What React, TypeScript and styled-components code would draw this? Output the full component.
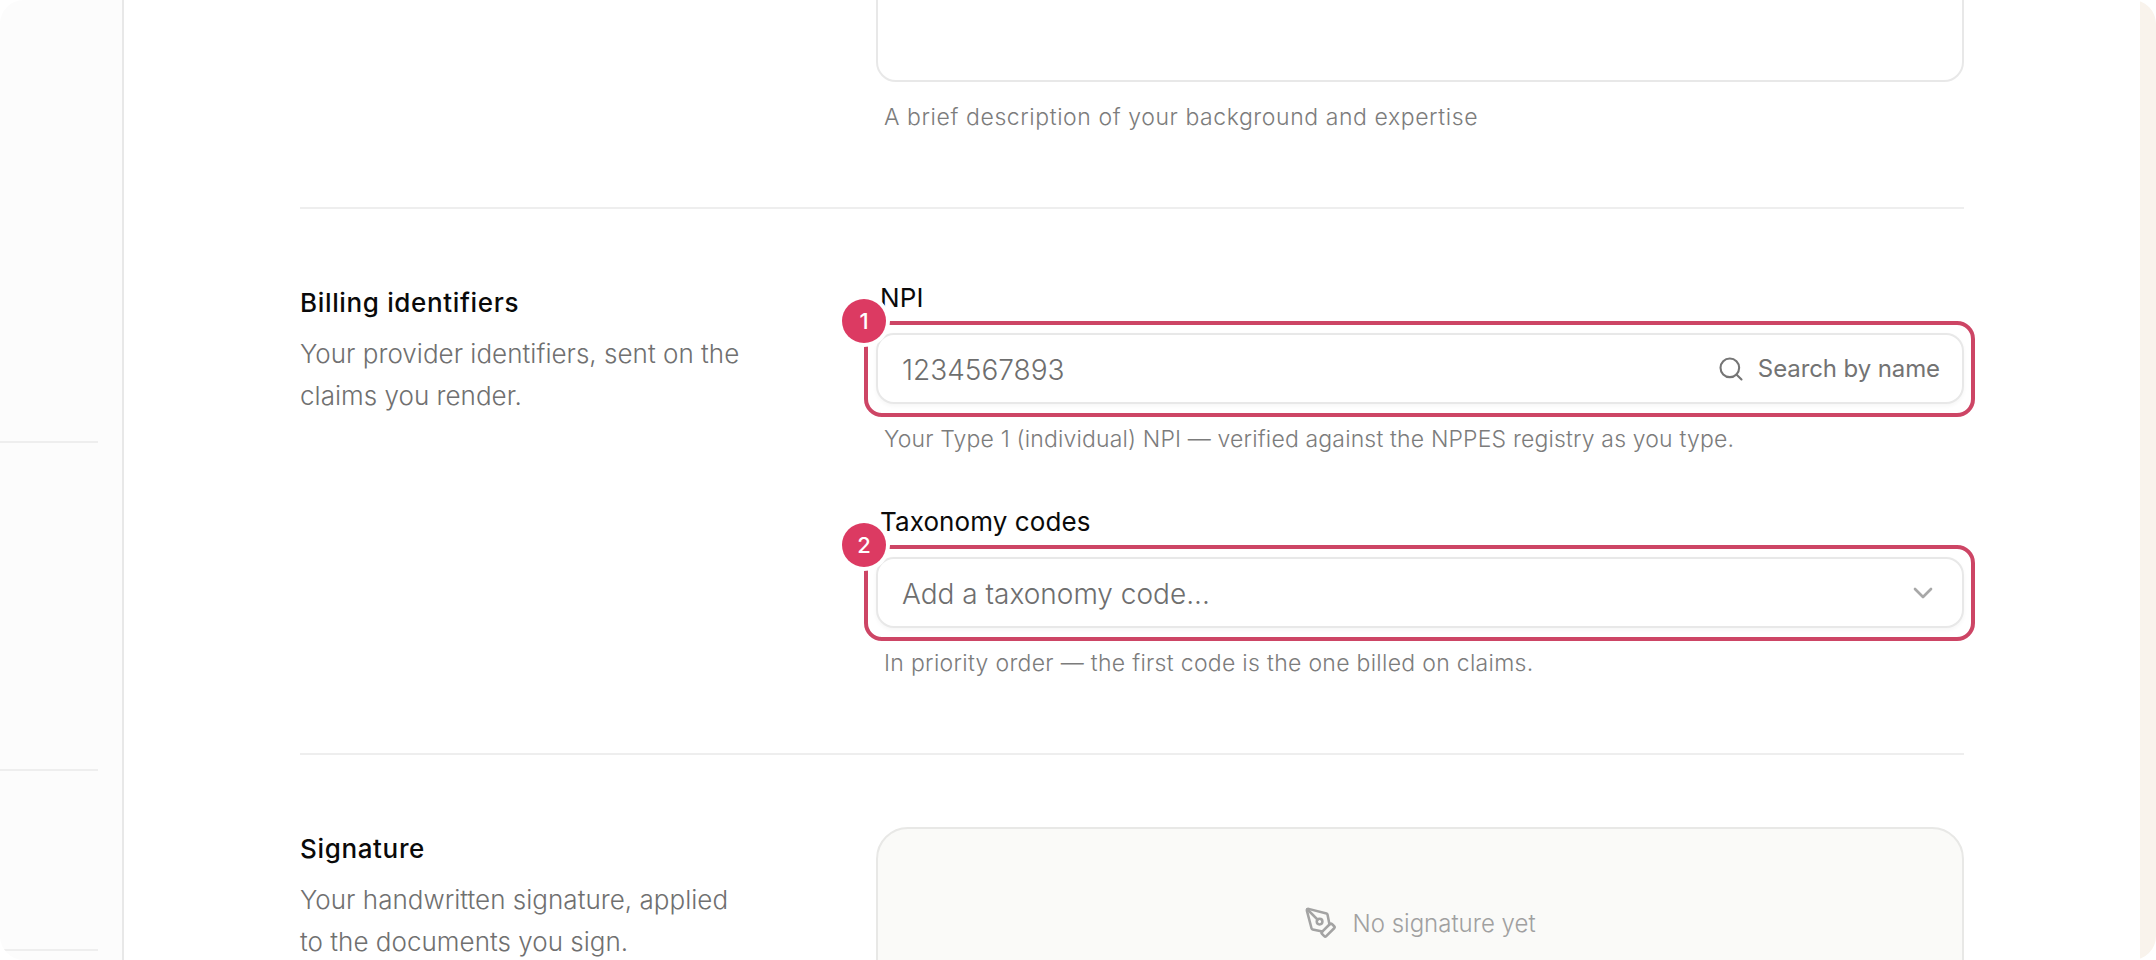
import styled, { createGlobalStyle } from "styled-components";
import { ChevronDown, PenTool, Search } from "lucide-react";

const GlobalStyle = createGlobalStyle`
  html, body {
    margin: 0;
    background: #ffffff;
    font-family: "Inter", "Liberation Sans", sans-serif;
  }
  * {
    box-sizing: border-box;
  }
`;

const Frame = styled.div`
  display: flex;
  height: 960px;
  overflow: hidden;
  border-radius: 24px;
  background: #ffffff;
`;

const Sidebar = styled.aside`
  flex: 0 0 124px;
  background: #fcfcfc;
  border-right: 2px solid #e8e8e8;
`;

const SidebarGroup = styled.div<{ $height: number }>`
  width: 98px;
  height: ${({ $height }) => $height}px;
  border-bottom: 2px solid #eeeeee;
`;

const Main = styled.main`
  flex: 1;
  min-width: 0;
  padding: 0 176px;
`;

const Content = styled.div`
  margin-top: -118px;
`;

const SidePanel = styled.div`
  flex: 0 0 16px;
  background: #f9f3ec;
`;

const Section = styled.section`
  display: grid;
  grid-template-columns: 576px 1fr;
  padding: 72px 0 75px;
  border-bottom: 2px solid #eeeeee;

  &:first-child {
    padding-top: 0;
  }

  &:last-child {
    border-bottom: none;
  }
`;

const SectionIntro = styled.div`
  padding-top: 4px;
`;

const SectionTitle = styled.h2`
  margin: 0;
  font-size: 26px;
  line-height: 36px;
  font-weight: 500;
  letter-spacing: 0.65px;
  color: #0a0a0a;
`;

const SectionText = styled.p`
  margin: 12px 0 0;
  width: 450px;
  font-size: 26px;
  line-height: 42px;
  font-weight: 300;
  letter-spacing: 0.02px;
  color: #707070;
`;

const Fields = styled.div`
  display: flex;
  flex-direction: column;
  gap: 51px;
`;

const Field = styled.div`
  display: flex;
  flex-direction: column;
`;

const Label = styled.label`
  margin: 2px 0 20px 4px;
  font-size: 26px;
  line-height: 30px;
  font-weight: 400;
  letter-spacing: 0.1px;
  color: #0a0a0a;
`;

const Help = styled.p<{ $tracking: number }>`
  margin: 20px 0 0 8px;
  font-size: 23px;
  line-height: 30px;
  font-weight: 300;
  letter-spacing: ${({ $tracking }) => $tracking}px;
  color: #7c7c7c;
`;

const Textarea = styled.div`
  height: 200px;
  border: 2px solid #e8e8e8;
  border-radius: 20px;
  background: #ffffff;
`;

const InputWrap = styled.div`
  position: relative;
`;

const Input = styled.div`
  display: flex;
  align-items: center;
  justify-content: space-between;
  height: 71px;
  padding: 0 22px 0 24px;
  border: 2px solid #e8e8e8;
  border-radius: 18px;
  background: #ffffff;
  box-shadow: 0 2px 4px rgba(0, 0, 0, 0.04);
`;

const InputText = styled.span`
  margin-top: 2px;
  font-size: 28px;
  font-weight: 300;
  letter-spacing: 0;
  color: #6e6e6e;
`;

const SearchHint = styled.span`
  display: flex;
  align-items: center;
  gap: 13px;
  font-size: 24px;
  letter-spacing: -0.1px;
  color: #737373;

  svg {
    color: #757575;
  }
`;

const ChevronIcon = styled(ChevronDown)`
  margin-top: 1px;
  margin-right: 1px;
  color: #a8a8a8;
`;

const Highlight = styled.div`
  position: absolute;
  inset: -12px -11px -13px -12px;
  border: 4px solid #cd4565;
  border-radius: 18px;
  pointer-events: none;
`;

const Badge = styled.span`
  position: absolute;
  left: -34px;
  top: -34px;
  display: flex;
  align-items: center;
  justify-content: center;
  width: 44px;
  height: 44px;
  border-radius: 50%;
  background: #dc3a62;
  box-shadow: 0 0 0 4px #ffffff;
  font-size: 22px;
  font-weight: 500;
  color: #ffffff;
`;

const SignatureBox = styled.div`
  display: flex;
  align-items: center;
  justify-content: center;
  gap: 14px;
  height: 192px;
  border: 2px solid #e8e8e6;
  border-radius: 32px;
  background: #fafaf8;
`;

const SignatureHint = styled.span`
  font-size: 24px;
  font-weight: 300;
  letter-spacing: 0;
  color: #a0a0a0;
`;

const SignatureIcon = styled(PenTool)`
  color: #a3a3a3;
`;

const App = () => {
  return (
    <>
      <GlobalStyle />
      <Frame>
        <Sidebar>
          <SidebarGroup $height={443} />
          <SidebarGroup $height={328} />
          <SidebarGroup $height={180} />
        </Sidebar>
        <Main>
          <Content>
            <Section>
              <div />
              <Field>
                <Textarea />
                <Help $tracking={0.58}>
                  A brief description of your background and expertise
                </Help>
              </Field>
            </Section>
            <Section>
              <SectionIntro>
                <SectionTitle>Billing identifiers</SectionTitle>
                <SectionText>
                  Your provider identifiers, sent on the claims you render.
                </SectionText>
              </SectionIntro>
              <Fields>
                <Field>
                  <Label>NPI</Label>
                  <InputWrap>
                    <Input>
                      <InputText>1234567893</InputText>
                      <SearchHint>
                        <Search size={28} strokeWidth={1.8} />
                        Search by name
                      </SearchHint>
                    </Input>
                    <Highlight />
                    <Badge>1</Badge>
                  </InputWrap>
                  <Help $tracking={0.16}>
                    Your Type 1 (individual) NPI — verified against the NPPES
                    registry as you type.
                  </Help>
                </Field>
                <Field>
                  <Label>Taxonomy codes</Label>
                  <InputWrap>
                    <Input>
                      <InputText>Add a taxonomy code...</InputText>
                      <ChevronIcon size={32} strokeWidth={2} />
                    </Input>
                    <Highlight />
                    <Badge>2</Badge>
                  </InputWrap>
                  <Help $tracking={0.3}>
                    In priority order — the first code is the one billed on
                    claims.
                  </Help>
                </Field>
              </Fields>
            </Section>
            <Section>
              <SectionIntro>
                <SectionTitle>Signature</SectionTitle>
                <SectionText>
                  Your handwritten signature, applied to the documents you sign.
                </SectionText>
              </SectionIntro>
              <SignatureBox>
                <SignatureIcon size={34} strokeWidth={1.8} />
                <SignatureHint>No signature yet</SignatureHint>
              </SignatureBox>
            </Section>
          </Content>
        </Main>
        <SidePanel />
      </Frame>
    </>
  );
};

export default App;
